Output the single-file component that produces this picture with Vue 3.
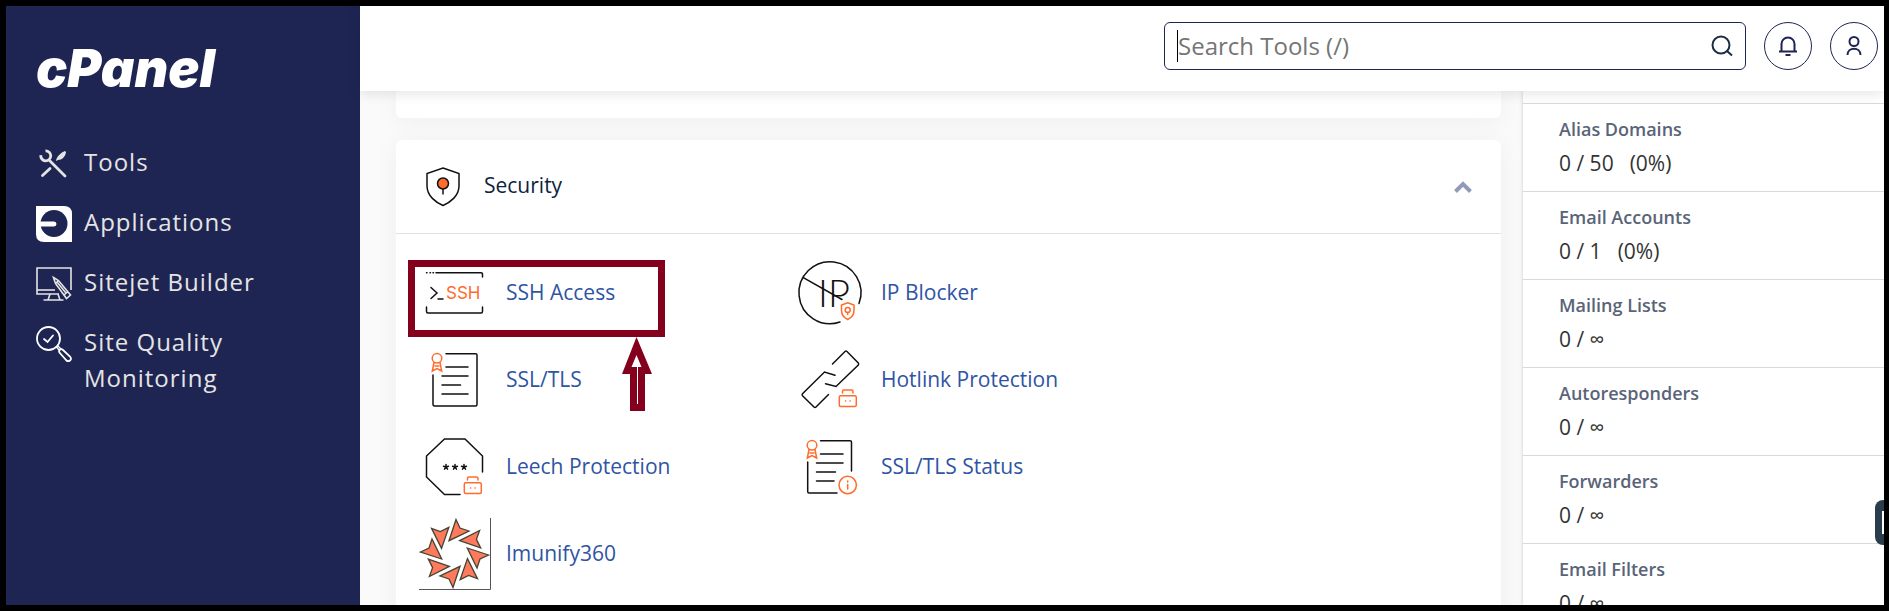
<template>
  <div class="app">
    <aside class="sidebar">
      <a href="#" class="logo">cPanel</a>
      <nav class="nav">
        <a v-for="item in navItems" :key="item.icon" href="#" class="nav-item">
          <svg v-if="item.icon === 'tools'" viewBox="0 0 36 36" class="nav-icon">
            <path d="M14 15 L29 30" stroke="#e4e4e4" stroke-width="2.8" stroke-linecap="round" />
            <path d="M6.5 29.5 L14 22.5" stroke="#e4e4e4" stroke-width="2.8" stroke-linecap="round" />
            <path d="M9.5 4.8 A5 5 0 1 1 4.8 9.2" fill="none" stroke="#e4e4e4" stroke-width="2.8" />
            <path d="M20 15 C20.5 10.500 25 6.500 29 5 L30 6 C29.500 10.500 26 14 22 14 Z" fill="#e4e4e4" />
          </svg>
          <svg v-else-if="item.icon === 'apps'" viewBox="0 0 36 36" class="nav-icon">
            <path d="M0 0 H28 Q36 0 36 8 V36 H8 Q0 36 0 28 Z" fill="#fff" />
            <circle cx="18" cy="17.500" r="13.500" fill="#1f2553" />
            <path d="M4 15.500 H18 A2.500 2.500 0 0 1 18 20.500 H4 Z" fill="#fff" />
          </svg>
          <svg v-else-if="item.icon === 'sitejet'" viewBox="0 0 36 36" class="nav-icon">
            <g fill="none" stroke="#e4e4e4" stroke-width="1.600">
              <path d="M23 28 H1 V2 H35 V24" />
              <path d="M1 24 H19" />
              <path d="M14 28 L12 34 M22 28 L24 34 M7.500 34 H27.500" />
              <path d="M17.500 11.500 L22.500 14.500 L34.500 29 L30.500 32.500 L19.500 17.500 Z M28.500 28.500 L32 25.500 M19.500 17.500 L22.500 14.500 M21 16 L30 27" />
            </g>
          </svg>
          <svg v-else viewBox="0 0 36 36" class="nav-icon">
            <g fill="none" stroke="#fff" stroke-width="1.800" stroke-linecap="round">
              <circle cx="12.500" cy="12.500" r="11.500" />
              <path d="M8 13 L11.500 16 L17 9.500" />
              <path d="M20.500 21 L23.500 24.500 M22 20 L25 23" stroke-width="1.400" />
              <path d="M23.500 26.500 Q22.500 24.500 24 23.500 Q25.500 22.500 27 24 L34 30.500 Q36 33 34 34.500 Q32 36 30 34 Z" />
            </g>
          </svg>
          <span>{{ item.label }}</span>
        </a>
      </nav>
    </aside>

    <div class="main">
      <header class="topbar">
        <label class="search">
          <span class="caret"></span>
          <input type="text" placeholder="Search Tools (/)" aria-label="Search Tools" />
          <svg viewBox="0 0 22 22" class="search-icon">
            <circle cx="10" cy="10" r="8.500" />
            <path d="M16 16 L21 20.500" />
          </svg>
        </label>
        <button class="round-btn" aria-label="Notifications">
          <svg viewBox="0 0 20 20">
            <path d="M1 15.500 H19 M3.500 15.500 V8 A6.500 6.500 0 0 1 16.500 8 V15.500 M7.500 19 H12.500" />
          </svg>
        </button>
        <button class="round-btn" aria-label="Account">
          <svg viewBox="0 0 20 20">
            <circle cx="10" cy="5.500" r="4.500" />
            <path d="M3.500 19 C3.500 10.500 16.500 10.500 16.500 19" />
          </svg>
        </button>
      </header>

      <div class="body">
        <div class="content">
          <section class="card card-prev"></section>

          <section class="card">
            <div class="card-header">
              <svg viewBox="0 0 34 40" class="shield">
                <path d="M17 1 L33 6.500 V19 C33 29 24 35.500 17 38.500 C10 35.500 1 29 1 19 V6.500 Z" fill="none" stroke="#111" stroke-width="1.500" />
                <path d="M17 21 V27.500" stroke="#111" stroke-width="1.500" />
                <circle cx="17" cy="16.500" r="5.500" fill="#ff6c2c" stroke="#111" stroke-width="1.500" />
              </svg>
              <h2>Security</h2>
              <button class="collapse" aria-label="Collapse">
                <svg viewBox="0 0 18 12">
                  <path d="M1.500 10.500 L9 3 L16.500 10.500" />
                </svg>
              </button>
            </div>

            <div class="tools">
              <div v-for="tool in tools" :key="tool.id" class="tool">
                <svg viewBox="0 0 72 72" class="tool-icon">
                  <g v-if="tool.id === 'ssh'" class="ink">
                    <path d="M7.500 15.700 H8 M11 15.700 H11.500 M14 15.700 H14.500 M17 15.700 H62 Q63.500 15.700 63.500 17 V20" />
                    <path d="M7.500 50 V54.500 Q7.500 56 9 56 H62 Q63.500 56 63.500 54.500 V50" />
                    <path d="M12 30.500 L18 36 L12 41.500 M19 42 H24" />
                    <text x="27" y="42" class="ssh-text">SSH</text>
                  </g>
                  <g v-else-if="tool.id === 'ssl'" class="ink">
                    <path d="M27 9.700 H56.500 Q58 9.700 58 11 V60.500 Q58 62 56.500 62 H15.500 Q14 62 14 60.500 V31" />
                    <path d="M27 23 H49 M23 32 H49 M23 41 H41.500 M23 50 H49" />
                  </g>
                  <g v-else-if="tool.id === 'leech'" class="ink">
                    <path d="M41 63.500 H25.500 L7.500 46 V25 L25.500 8 H46 L63.500 25 V41" />
                    <path v-for="x in [27, 36, 45]" :key="x" :d="star(x, 36)" />
                  </g>
                  <g v-else-if="tool.id === 'imunify'">
                    <path d="M71.500 0 V71.500 H0" fill="none" stroke="#555" />
                    <path
                      v-for="n in 8"
                      :key="n"
                      d="M30 22.700 L37 1.500 L41 10 L50 13 Z"
                      :transform="`rotate(${n * 45} 35.500 35.500)`"
                      fill="#ff7a5c"
                      stroke="#443"
                      stroke-width="1.300"
                    />
                  </g>
                  <g v-else-if="tool.id === 'ip'" class="ink">
                    <path d="M46 65 A31 31 0 1 1 65 46.500" />
                    <path d="M9.300 20.700 L48 42.500" />
                    <text x="24" y="50" class="ip-text">IP</text>
                  </g>
                  <g v-else-if="tool.id === 'hotlink'" class="ink">
                    <path d="M38.500 20 L51 7.500 Q52 6.700 53 7.500 L64.300 19 Q65 20 64.300 21 L42 42.500 L31.500 39.700" />
                    <path d="M34.500 50.500 L22 63 Q21 64 20 63 L8.500 51.700 Q7.700 50.700 8.500 49.700 L30.500 28 L41 31.300" />
                  </g>
                  <g v-else class="ink">
                    <path d="M26.500 9.700 H56 Q57.500 9.700 57.500 11 V40 M13.700 31 V60.500 Q13.700 62 15 62 H43" />
                    <path d="M26.500 23 H49 M22.500 32 H49 M22.500 41 H41.500 M22.500 50 H40" />
                  </g>

                  <!-- orange marks -->
                  <g v-if="tool.mark === 'ribbon' || tool.id === 'status'" class="mark">
                    <circle cx="18" cy="14.300" r="4.800" />
                    <path d="M15 18.500 L13.300 27 L18 24.500 L22.700 27 L21 18.500 M16 22 H20" />
                  </g>
                  <g v-if="tool.mark === 'lock'" class="mark">
                    <rect x="45.300" y="51.700" width="17" height="10.800" rx="1.500" />
                    <path d="M48.500 49 V47.500 Q48.500 46 50 46 H57.500 Q59 46 59 47.500 V49" />
                    <path d="M51.500 57 H51.700 M56 57 H56.200" />
                  </g>
                  <g v-if="tool.mark === 'shield'" class="mark">
                    <path d="M53.700 45.700 L60 48 V53.500 C60 58 57 61 53.700 62.500 C50.400 61 47.500 58 47.500 53.500 V48 Z" />
                    <circle cx="53.700" cy="53" r="2.500" />
                    <path d="M53.700 55.500 V57.500" />
                  </g>
                  <g v-if="tool.mark === 'info'" class="mark">
                    <circle cx="53.700" cy="54" r="8.700" />
                    <path d="M53.700 53.500 V58 M53.700 50 V51" />
                  </g>
                </svg>
                <a href="#">{{ tool.label }}</a>

                <template v-if="tool.id === 'ssh'">
                  <span class="highlight"></span>
                  <svg viewBox="0 0 30 74" class="arrow">
                    <path d="M14.500 0 L30 37 H23 V74 H8 V37 H0 Z" fill="#85001c" />
                    <path d="M14.500 18 L19.500 30 H9.500 Z M15 28 H16 V67 H15 Z" fill="#fff" />
                  </svg>
                </template>
              </div>
            </div>
          </section>
        </div>

        <aside class="stats">
          <div v-for="stat in stats" :key="stat.label" class="stat">
            <div class="stat-label">{{ stat.label }}</div>
            <div class="stat-value">
              <span>0 / {{ stat.max }}</span>
              <span v-if="stat.percent">({{ stat.percent }})</span>
            </div>
          </div>
        </aside>
      </div>
    </div>

    <button class="side-tab" aria-label="Feedback"><span></span></button>
  </div>
</template>

<script setup>
const navItems = [
  { icon: 'tools', label: 'Tools' },
  { icon: 'apps', label: 'Applications' },
  { icon: 'sitejet', label: 'Sitejet Builder' },
  { icon: 'quality', label: 'Site Quality Monitoring' }
];

const tools = [
  { id: 'ssh', label: 'SSH Access' },
  { id: 'ip', label: 'IP Blocker', mark: 'shield' },
  { id: 'ssl', label: 'SSL/TLS', mark: 'ribbon' },
  { id: 'hotlink', label: 'Hotlink Protection', mark: 'lock' },
  { id: 'leech', label: 'Leech Protection', mark: 'lock' },
  { id: 'status', label: 'SSL/TLS Status', mark: 'info' },
  { id: 'imunify', label: 'Imunify360' }
];

const stats = [
  { label: 'Alias Domains', max: '50', percent: '0%' },
  { label: 'Email Accounts', max: '1', percent: '0%' },
  { label: 'Mailing Lists', max: '∞' },
  { label: 'Autoresponders', max: '∞' },
  { label: 'Forwarders', max: '∞' },
  { label: 'Email Filters', max: '∞' }
];

// five short rays from the centre
function star(x, y) {
  let d = '';
  for (let i = 0; i < 5; i++) {
    const a = (i * 72 - 90) * Math.PI / 180;
    d += `M${x} ${y} L${(x + 2.6 * Math.cos(a)).toFixed(1)} ${(y + 2.6 * Math.sin(a)).toFixed(1)} `;
  }
  return d;
}
</script>

<style>
body {
  margin: 0;
}
</style>

<style scoped>
.app {
  position: relative;
  box-sizing: border-box;
  display: flex;
  height: 100vh;
  overflow: hidden;
  border: 6px solid #000;
  border-right-width: 5px;
  background: #fafafa;
  font-family: "Open Sans", "Noto Sans", sans-serif;
  font-size: 21px;
}

button {
  padding: 0;
  background: none;
  cursor: pointer;
}

a {
  text-decoration: none;
}

/* sidebar */
.sidebar {
  flex: 0 0 354px;
  box-sizing: border-box;
  padding: 36px 30px 0;
  background: #1f2553;
}

.logo {
  display: block;
  height: 54px;
  color: #fff;
  font-family: Inter, "Open Sans", sans-serif;
  font-size: 52px;
  font-weight: 900;
  font-style: italic;
  line-height: 54px;
}

.nav {
  display: flex;
  flex-direction: column;
  gap: 22px;
  margin-top: 48px;
}

.nav-item {
  display: flex;
  align-items: flex-start;
  gap: 12px;
  padding-right: 60px;
  color: #e4e4e4;
  font-size: 24px;
  line-height: 36px;
  letter-spacing: 1px;
}

.nav-icon {
  flex: none;
  width: 36px;
  height: 36px;
  margin-top: 2px;
}

/* top bar */
.main {
  flex: 1;
  min-width: 0;
  display: flex;
  flex-direction: column;
}

.topbar {
  position: relative;
  z-index: 1;
  flex: none;
  display: flex;
  justify-content: flex-end;
  gap: 18px;
  padding: 16px 6px 21px;
  background: #fff;
  box-shadow: 0 3px 12px rgba(0, 0, 0, 0.1);
}

.search {
  flex: 0 1 582px;
  box-sizing: border-box;
  display: flex;
  align-items: center;
  height: 48px;
  padding: 0 12px;
  border: 1px solid #1f2553;
  border-radius: 6px;
}

.caret {
  width: 1px;
  height: 32px;
  background: #000;
}

.search input {
  flex: 1;
  min-width: 0;
  padding: 0 0 2px;
  border: 0;
  outline: 0;
  background: none;
  font: inherit;
  font-size: 24px;
}

.search input::placeholder {
  color: #757575;
}

.search-icon {
  width: 22px;
  height: 22px;
  fill: none;
  stroke: #1d2d44;
  stroke-width: 2;
}

.round-btn {
  flex: none;
  display: flex;
  align-items: center;
  justify-content: center;
  width: 48px;
  height: 48px;
  border: 1px solid #1f2553;
  border-radius: 50%;
}

.round-btn svg {
  width: 20px;
  height: 20px;
  fill: none;
  stroke: #1f2553;
  stroke-width: 2;
}

/* content */
.body {
  flex: 1;
  min-height: 0;
  display: flex;
  overflow: hidden;
}

.content {
  flex: 1;
  min-width: 0;
  padding: 0 22px 0 36px;
}

.card {
  background: #fff;
  border-radius: 6px;
  box-shadow: 0 3px 24px rgba(20, 40, 60, 0.05);
}

.card-prev {
  height: 27px;
  margin-bottom: 22px;
  border-radius: 0 0 6px 6px;
}

.card-header {
  display: flex;
  align-items: center;
  height: 93px;
  padding: 0 29px 0 30px;
  border-bottom: 1px solid #dfe0ea;
}

.shield {
  width: 34px;
  height: 40px;
}

.card-header h2 {
  flex: 1;
  margin: 0 0 0 24px;
  padding-bottom: 4px;
  color: #0c2340;
  font-size: 21px;
  font-weight: 400;
}

.collapse {
  display: flex;
  border: 0;
}

.collapse svg {
  width: 18px;
  height: 12px;
  fill: none;
  stroke: #8f9bb8;
  stroke-width: 4;
}

.tools {
  display: grid;
  grid-template-columns: repeat(auto-fill, 360px);
  gap: 15px;
  max-width: 800px;
  padding: 23px 23px 60px;
}

.tool {
  position: relative;
  display: flex;
  align-items: center;
  gap: 15px;
}

.tool-icon {
  flex: none;
  width: 72px;
  height: 72px;
}

.tool a {
  padding-bottom: 2px;
  color: #2f54a3;
}

.ink,
.mark {
  fill: none;
  stroke: #111;
  stroke-width: 1.5;
  stroke-linecap: round;
}

.mark {
  stroke: #ff6c2c;
}

.ssh-text {
  fill: #ff6c2c;
  stroke: none;
  font-family: Inter, sans-serif;
  font-size: 17px;
  font-weight: 400;
}

.ip-text {
  fill: #111;
  stroke: none;
  font-family: Lato, sans-serif;
  font-size: 38px;
  font-weight: 300;
}

/* red box and arrow on top of the SSH entry */
.highlight {
  position: absolute;
  top: 3px;
  left: -11px;
  box-sizing: border-box;
  width: 257px;
  height: 77px;
  border: 7px solid #85001c;
}

.arrow {
  position: absolute;
  top: 80px;
  left: 203px;
  width: 30px;
  height: 74px;
}

/* statistics */
.stats {
  flex: 0 0 361px;
  padding-top: 12px;
  background: #fff;
  box-shadow: 0 0 4px rgba(0, 0, 0, 0.2);
}

.stat {
  padding: 12px 36px 11px;
  border-top: 1px solid #d9d9d9;
}

.stat-label {
  color: #5a6478;
  font-size: 18px;
  font-weight: 600;
  line-height: 27px;
}

.stat-value {
  display: flex;
  gap: 16px;
  margin-top: 4px;
  color: #333;
  line-height: 33px;
}

.side-tab {
  position: absolute;
  right: 0;
  bottom: 60px;
  z-index: 2;
  display: flex;
  align-items: center;
  justify-content: flex-end;
  width: 9px;
  height: 45px;
  border: 0;
  border-radius: 8px 0 0 8px;
  background: #2a3d4d;
}

.side-tab span {
  width: 2px;
  height: 23px;
  background: #fff;
}
</style>
